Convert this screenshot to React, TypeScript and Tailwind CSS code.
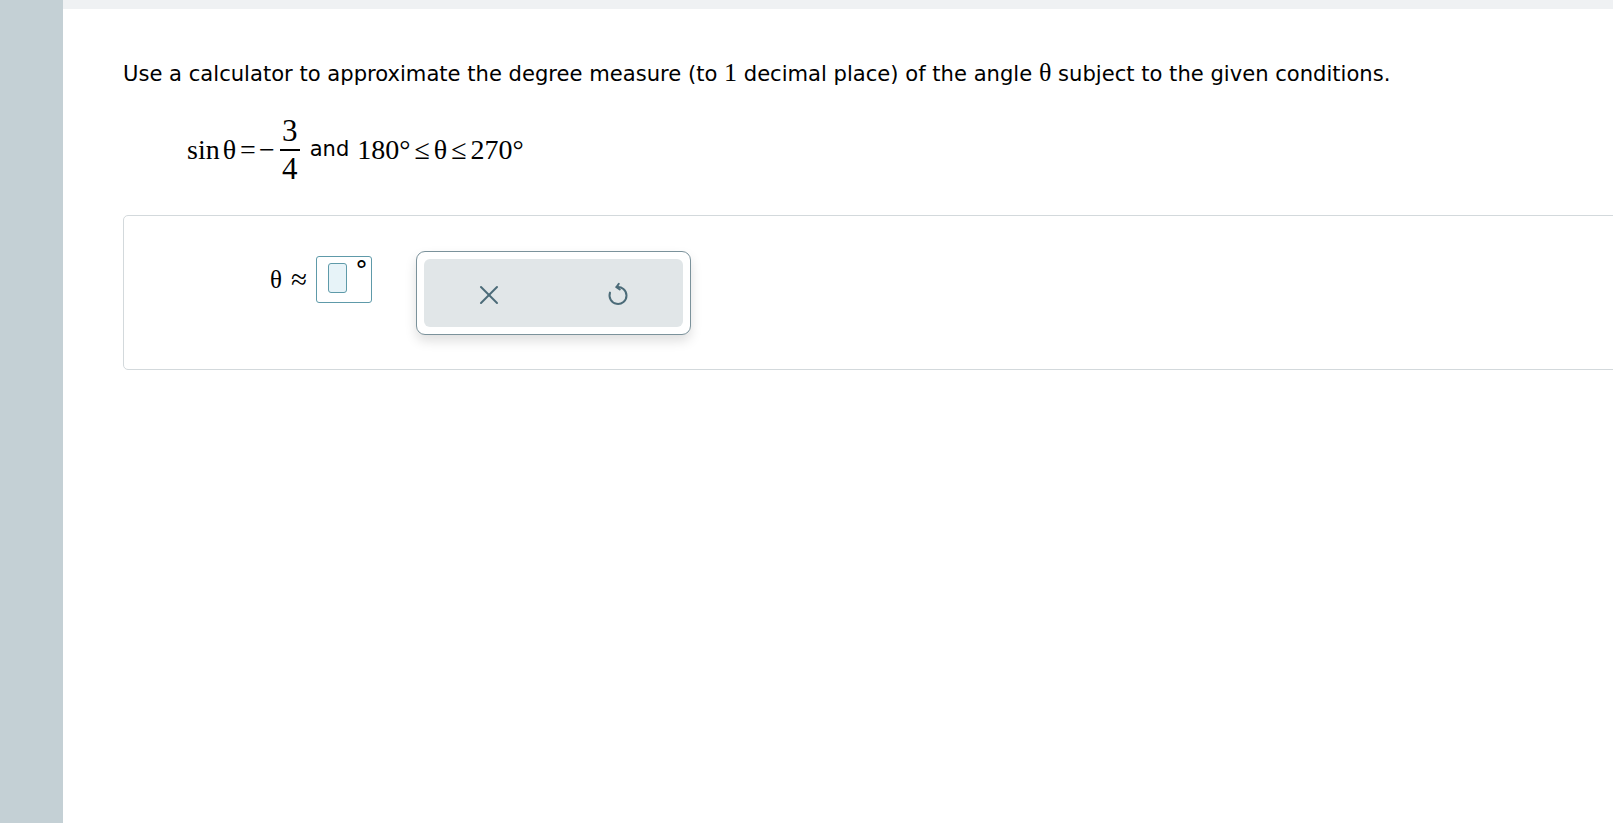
import { useState } from "react";

const serif = "font-['Liberation_Serif','Times_New_Roman',serif]";

function UndoIcon() {
  return (
    <svg width="22" height="26" viewBox="0 0 22 26" fill="none" stroke="#4b6b78" strokeWidth="2" strokeLinecap="round" strokeLinejoin="round">
      <path d="M9.5 7.1 A8.5 8.5 0 1 1 3 12.6" />
      <path d="M11.8 3.8 L9.5 7.1 L12.8 9.5" />
    </svg>
  );
}

function CloseIcon() {
  return (
    <svg width="20" height="20" viewBox="0 0 20 20" fill="none" stroke="#4b6b78" strokeWidth="2" strokeLinecap="round">
      <path d="M2 2 L18 18" />
      <path d="M18 2 L2 18" />
    </svg>
  );
}

function AnswerInput() {
  // empty input with caret box + degree sign
  return (
    <div className="relative w-[56px] h-[47px] border-[1.5px] border-[#5e9aa9] rounded-[3px] bg-white">
      <div className="absolute left-[11px] top-[6px] w-[19px] h-[30px] border border-[#5e9aa9] rounded-[3px] bg-[#e7f3f8]" />
      <span className="absolute left-[38px] top-[-3px] text-[26px] leading-[34px] text-black font-['DejaVu_Sans',sans-serif]">°</span>
    </div>
  );
}

export default function App() {
  const [answer] = useState("");

  return (
    <div className="flex h-screen w-full overflow-hidden bg-white font-['DejaVu_Sans','Verdana',sans-serif] text-black">
      <div className="w-[63px] shrink-0 bg-[#c4d0d5]" />

      <div className="flex-1 flex flex-col min-w-0">
        <div className="h-[9px] bg-[#eff1f3]" />

        <div className="pl-[60px] pt-[49px]">
          <p className="text-[21.1px] leading-[30px] whitespace-nowrap">
            Use a calculator to approximate the degree measure (to{" "}
            <span className={`${serif} text-[26px]`}>1</span> decimal place) of the angle{" "}
            <span className={`${serif} text-[26px]`}>θ</span> subject to the given conditions.
          </p>

          <div className="flex items-center mt-[29px] ml-[64px] h-[64px]">
            <span className={`${serif} text-[28px] leading-none`}>sin</span>
            <span className={`${serif} text-[28px] leading-none ml-[3px]`}>θ</span>
            <span className={`${serif} text-[28px] leading-none ml-[4px]`}>=</span>
            <span className={`${serif} text-[28px] leading-none ml-[3px]`}>−</span>
            <span className="flex flex-col items-center ml-[5px]">
              <span className={`${serif} text-[31px] leading-[28px]`}>3</span>
              <span className="block w-[20px] h-[1.5px] bg-black my-[4px]" />
              <span className={`${serif} text-[31px] leading-[28px]`}>4</span>
            </span>
            <span className="text-[21px] ml-[10px]">and</span>
            <span className={`${serif} text-[28px] leading-none ml-[8px] flex items-center`}>
              <span>180°</span>
              <span className="mx-[4px]">≤</span>
              <span>θ</span>
              <span className="mx-[4px]">≤</span>
              <span>270°</span>
            </span>
          </div>

          <div className="mt-[33px] w-[1560px] h-[155px] border border-[#d3d9dc] rounded-[5px] flex items-start pl-[146px] pt-[35px]">
            <div className="flex items-center mt-[5px]">
              <span className={`${serif} text-[25px] mr-[9px]`}>θ</span>
              <span className={`${serif} text-[29px] mr-[9px]`}>≈</span>
              <AnswerInput />
              {answer}
            </div>

            <div className="ml-[44px] w-[275px] h-[84px] bg-white border border-[#7b929b] rounded-[9px] p-[7px] shadow-[0_6px_12px_rgba(0,0,0,0.13)]">
              <div className="h-full bg-[#e1e6e8] rounded-[6px] flex items-center">
                <button className="flex-1 flex justify-center pt-[4px]">
                  <CloseIcon />
                </button>
                <button className="flex-1 flex justify-center">
                  <UndoIcon />
                </button>
              </div>
            </div>
          </div>
        </div>
      </div>
    </div>
  );
}
